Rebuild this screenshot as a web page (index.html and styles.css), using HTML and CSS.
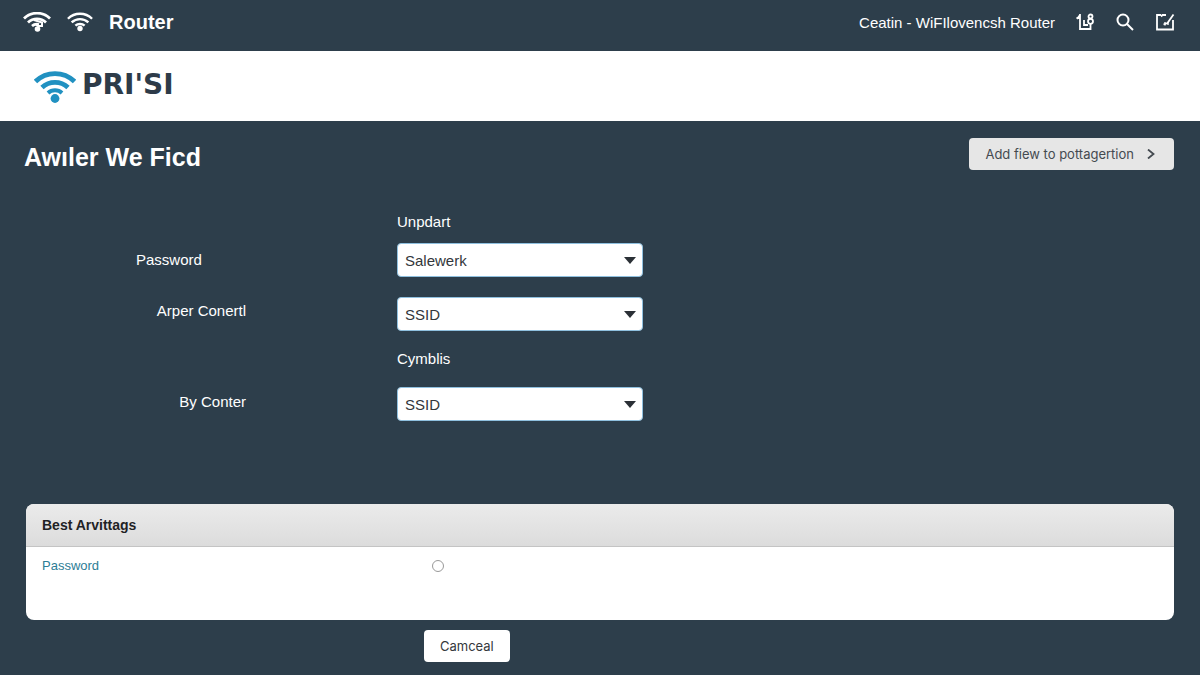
FILE: index.html
```html
<!DOCTYPE html>
<html lang="en">
<head>
<meta charset="utf-8">
<meta name="viewport" content="width=device-width, initial-scale=1">
<title>Router</title>
<link rel="stylesheet" href="styles.css">
</head>
<body>
<header class="topbar">
  <div class="topbar-brand">
    <svg class="wifi" viewBox="0 0 28 20" width="28" height="20" aria-hidden="true">
      <g fill="none" stroke="currentColor" stroke-width="2.800">
        <path d="M1 6.500A18.500 18.500 0 0 1 27 6.500"/><path d="M5 10.500A13 13 0 0 1 23 10.500"/><path d="M9 14A7.500 7.500 0 0 1 16 12.500"/>
        <path d="M11 8l8 2.500v3.500h-4l-2-1.500" stroke-width="2"/>
      </g>
      <circle cx="14.500" cy="17" r="2.800" fill="currentColor"/>
    </svg>
    <svg class="wifi" viewBox="0 0 28 20" width="26" height="20" aria-hidden="true">
      <g fill="none" stroke="currentColor" stroke-width="2.600">
        <path d="M1 6.500A18.500 18.500 0 0 1 27 6.500"/><path d="M5 10.500A13 13 0 0 1 23 10.500"/><path d="M9 14A7.500 7.500 0 0 1 19 14"/>
      </g>
      <circle cx="14" cy="17" r="2.900" fill="currentColor"/>
    </svg>
    <span class="topbar-name">Router</span>
  </div>
  <div class="topbar-tools">
    <span class="topbar-text">Ceatin - WiFIlovencsh Router</span>
    <button class="icon-button" type="button" aria-label="Devices">
      <svg viewBox="0 0 20 18" width="20" height="18" fill="none" stroke="currentColor" stroke-width="1.800">
        <path d="M5 1v15h10.500v-5M1.500 5H5M2 6l3-4M9 7v5h4"/><circle cx="15.500" cy="3.500" r="2"/><circle cx="15.500" cy="8.300" r="2.500"/>
      </svg>
    </button>
    <button class="icon-button" type="button" aria-label="Search">
      <svg viewBox="0 0 20 18" width="20" height="18" fill="none" stroke="currentColor" stroke-width="2">
        <circle cx="8" cy="7" r="5.500"/><path d="M12 11l6 6"/>
      </svg>
    </button>
    <button class="icon-button" type="button" aria-label="Edit">
      <svg viewBox="0 0 20 18" width="20" height="18" fill="none" stroke="currentColor" stroke-width="1.800">
        <path d="M11 2H7.500L6 3.500M6 2H2v14.500h16V7"/><path d="M18.500 1.500l-6 8.500-4 1.500"/><path d="M10 9v3.500M13 12V9" stroke-width="1.400"/>
      </svg>
    </button>
  </div>
</header>

<div class="logo-band">
  <svg class="logo-mark" viewBox="0 0 42 33" width="42" height="33" aria-hidden="true">
    <g fill="none" stroke="currentColor" stroke-width="4.800">
      <path d="M1.500 11.500A28 28 0 0 1 40.500 11.500"/><path d="M8 17.500A19 19 0 0 1 34 17.500"/><path d="M14 23A10.500 10.500 0 0 1 28 23" stroke-width="4"/>
    </g>
    <circle cx="21" cy="28.500" r="4.400" fill="currentColor"/>
  </svg>
  <span class="logo-text">PRI'SI</span>
</div>

<main class="page">
  <div class="page-head">
    <h1 class="page-title">Awıler We Ficd</h1>
    <button class="add-button" type="button">Add fiew to pottagertion
      <svg viewBox="0 0 8 10" width="8" height="10" fill="none" stroke="currentColor" stroke-width="1.800" aria-hidden="true"><path d="M1 .500l5.500 4.500L1 9.500"/></svg>
    </button>
  </div>

  <form class="settings">
    <span class="caption">Unpdart</span>
    <label class="side-label side-label-start" for="password">Password</label>
    <div class="select-box"><select class="select" id="password"><option>Salewerk</option></select></div>
    <label class="side-label side-label-raised" for="arper">Arper Conertl</label>
    <div class="select-box"><select class="select" id="arper"><option>SSID</option></select></div>
    <span class="caption caption-tall">Cymblis</span>
    <label class="side-label" for="conter">By Conter</label>
    <div class="select-box"><select class="select" id="conter"><option>SSID</option></select></div>
  </form>

  <section class="card">
    <h2 class="card-head">Best Arvittags</h2>
    <div class="card-row">
      <label class="card-label" for="choice">Password</label>
      <input class="radio" type="radio" id="choice" name="choice">
    </div>
  </section>

  <div class="actions">
    <button class="cancel-button" type="button">Camceal</button>
  </div>
</main>
</body>
</html>
```
FILE: styles.css
```css
* {
  box-sizing: border-box;
}

body {
  margin: 0;
  min-height: 100vh;
  background: #2d3e4b;
  color: #fff;
  font-family: "Liberation Sans", Arial, sans-serif;
  font-size: 15px;
}

button,
select {
  font: inherit;
}

.topbar {
  display: flex;
  justify-content: space-between;
  align-items: center;
  padding: 8px 25px 15px 23px;
}

.topbar-brand {
  display: flex;
  align-items: center;
  gap: 16px;
}

.topbar-name {
  font-size: 20px;
  line-height: 28px;
  font-weight: bold;
}

.topbar-tools {
  display: flex;
  align-items: center;
  gap: 20px;
}

.topbar-text {
  font-size: 15px;
}

.icon-button {
  display: flex;
  padding: 0;
  border: 0;
  background: none;
  color: #fff;
}

.logo-band {
  display: flex;
  align-items: center;
  gap: 6px;
  height: 70px;
  padding: 0 34px;
  background: #fff;
}

.logo-mark {
  color: #2191c1;
}

.logo-text {
  padding-bottom: 4px;
  color: #2d3b49;
  font-family: "DejaVu Sans", sans-serif;
  font-size: 28px;
  font-weight: bold;
}

.page {
  padding: 17px 26px 13px;
}

.page-head {
  display: flex;
  justify-content: space-between;
  align-items: flex-start;
}

.page-title {
  margin: 0 0 0 -2px;
  font-size: 25px;
  line-height: 38px;
}

.add-button {
  display: flex;
  align-items: center;
  gap: 13px;
  height: 32px;
  padding: 0 19px 0 16px;
  border: 0;
  border-radius: 4px;
  background: #e6e6e6;
  color: #444a50;
  font-family: Inter, sans-serif;
  font-size: 13px;
}

.settings {
  display: grid;
  grid-template-columns: 110px 246px;
  column-gap: 151px;
  margin: 36px 0 83px 110px;
}

.caption {
  grid-column: 2;
  height: 31px;
  line-height: 20px;
}

.caption-tall {
  height: 38px;
}

.side-label {
  justify-self: end;
  height: 34px;
  line-height: 30px;
  white-space: nowrap;
}

.side-label-start {
  justify-self: start;
  line-height: 34px;
}

.side-label-raised {
  line-height: 28px;
}

.select-box {
  position: relative;
  height: 34px;
}

.select-box:has(#password) {
  margin-bottom: 20px;
}

.select-box:has(#arper) {
  margin-bottom: 18px;
}

.select-box::after {
  content: "";
  position: absolute;
  top: 14px;
  right: 7px;
  border: 6px solid transparent;
  border-top: 7px solid #2b3036;
  border-bottom: 0;
  pointer-events: none;
}

.select {
  width: 100%;
  height: 100%;
  padding: 0 28px 0 7px;
  border: 1px solid #8fc0df;
  border-radius: 4px;
  appearance: none;
  background: #fff;
  color: #33373b;
}

.card {
  overflow: hidden;
  border-radius: 8px;
  background: #fff;
}

.card-head {
  margin: 0;
  padding: 0 16px;
  border-bottom: 1px solid #c4c4c4;
  background: linear-gradient(#ebebeb, #dcdcdc);
  color: #1f2225;
  font-size: 14px;
  line-height: 42px;
}

.card-row {
  display: grid;
  grid-template-columns: 390px 1fr;
  align-items: start;
  min-height: 73px;
  padding: 9px 16px;
}

.card-label {
  color: #2d7d96;
  font-size: 13px;
  line-height: 20px;
}

.radio {
  width: 12px;
  height: 12px;
  margin: 4px 0;
  border: 1px solid #999;
  border-radius: 50%;
  appearance: none;
  background: #fff;
}

.radio:checked {
  background: #2d7d96;
}

.actions {
  padding: 10px 398px 0;
}

.cancel-button {
  display: block;
  height: 32px;
  padding: 0 16px;
  border: 0;
  border-radius: 4px;
  background: #fff;
  color: #34383c;
  font-family: Inter, sans-serif;
  font-size: 13px;
}
```
